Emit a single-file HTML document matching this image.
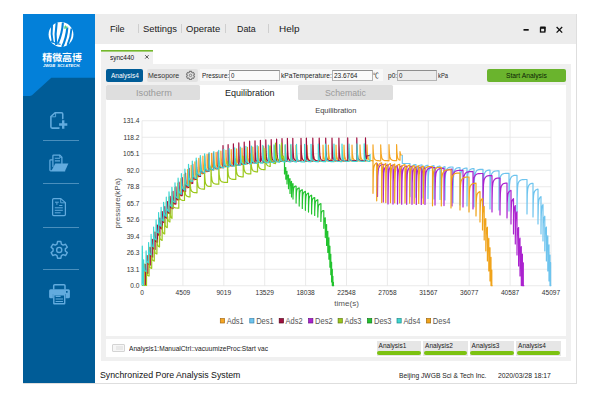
<!DOCTYPE html>
<html><head><meta charset="utf-8"><title>Synchronized Pore Analysis System</title>
<style>
html,body{margin:0;padding:0;background:#fff;}
body{width:600px;height:401px;position:relative;overflow:hidden;font-family:"Liberation Sans","Noto Sans CJK SC",sans-serif;color:#222;}
.abs{position:absolute;}
#win{left:23px;top:14px;width:553px;height:369px;background:#fff;border-right:1px solid #dedede;border-bottom:1px solid #dedede;}
#side{left:23px;top:14px;width:72px;height:369px;background:#005c97;}
#menubar{left:95px;top:14px;width:481px;height:30px;background:#ececec;}
.menu{top:22.5px;font-size:11.3px;color:#1a1a1a;line-height:13px;white-space:nowrap;}
.msep{top:24.3px;width:0.9px;height:8.6px;background:#cfcfcf;}
#panel{left:101px;top:64px;width:470px;height:297.4px;background:#f0f0f0;}
#ftab{left:101px;top:50px;width:52px;height:15px;background:linear-gradient(#74b72c 0,#74b72c 1px,#a3cf76 1px,#a3cf76 2px,#f0f0f0 2px);}
.t{white-space:nowrap;line-height:1;}
.inp{background:#fafafa;border:0.9px solid #b4b4b4;border-top-color:#8e8e8e;box-sizing:border-box;height:11.4px;top:69.6px;font-size:6.6px;line-height:9.6px;padding-left:1.5px;color:#222;}
.lbl{font-size:6.6px;top:71.8px;color:#222;}
.tab{top:85px;height:15.3px;font-size:9.6px;text-align:center;line-height:15.3px;color:#9a9a9a;background:#dedede;border-radius:1.5px;}
.abox{top:341px;width:44.8px;height:14.6px;background:#e6e6e6;font-size:6.7px;color:#222;}
.abox span{position:absolute;left:2.3px;top:1.3px;line-height:8px;}
.abox i{position:absolute;left:0.6px;right:0.6px;bottom:0.3px;height:4.2px;background:#7cc211;border-radius:2.2px;}
.sep{left:43px;width:35.5px;height:0.9px;background:#4a8fbd;}
</style></head><body>
<div id="win" class="abs"></div>
<div id="side" class="abs">
<svg width="72" height="369" viewBox="0 0 72 369" style="position:absolute;left:0;top:0">
<path d="M0 0H72V63.8H28.3L9 81.3Q8 82 6.5 82H0Z" fill="#0380d9"/>
<!-- logo -->
<g transform="translate(38,20.5)">
<circle r="12.4" fill="#fff"/>
<g fill="none" stroke="#0380d9" stroke-linecap="butt">
<path d="M-8.9 -9.5 Q-10.2 -1 -8.2 8" stroke-width="1.9"/>
<path d="M-4.3 -12 Q-6.2 -1 -4.8 10.5" stroke-width="2.1"/>
<path d="M1.9 -12 Q1.2 -1 -3 8.6" stroke-width="2.1"/>
<path d="M6.3 -7 Q5.6 3 1.2 12.5" stroke-width="2.2"/>
<path d="M10.5 -6 Q10 3 6.6 10.5" stroke-width="2.0"/>
<path d="M-10 6.4 Q-5 9.6 -0.5 9.8" stroke-width="1.2"/>
</g>
<path d="M4.6 -9.6l.7 1.5 1.6.2-1.2 1.1.3 1.6-1.4-.8-1.4.8.3-1.6-1.2-1.1 1.6-.2z" fill="#5fd08a"/>
</g>
<!-- icons -->
<g fill="none" stroke="#62abde" stroke-linejoin="round" stroke-linecap="round">
<path d="M36 114.1H29.2Q27.9 114.1 27.9 112.8V102.5L32.3 98.7H38.5Q39.75 98.7 39.75 100V104.6" stroke-width="1.55"/>
<path d="M32.6 99.3V102.8H28.5" stroke-width="0.9"/>
<path d="M40.2 106.3V114.8M36.1 110.55H44.3" stroke-width="2.4" stroke-linecap="butt"/>
</g>
<!-- folder -->
<g fill="none" stroke="#62abde" stroke-linejoin="round" stroke-linecap="round">
<path d="M29.4 145.8H27.7Q26.9 145.8 26.9 146.6V156.1Q26.9 156.9 27.7 156.9H41.6" stroke-width="1.25"/>
<path d="M29.9 152.5V141.8Q29.9 141 30.7 141H36.7L38.9 143.2V149.4" stroke-width="1.25"/>
<path d="M36.6 141.3V143.4H38.7" stroke-width="0.8"/>
<path d="M31.8 144.2H37M31.8 146.8H37" stroke-width="1.15" stroke-linecap="butt"/>
</g>
<path d="M32.3 149.5H45.4L42 157.1H28.3Z" fill="#62abde"/>
<!-- document -->
<g fill="none" stroke="#62abde" stroke-linejoin="round" stroke-linecap="round">
<path d="M30.7 184.6H37.8L42.4 188.6V200.6Q42.4 201.7 41.3 201.7H30.7Q29.6 201.7 29.6 200.6V185.7Q29.6 184.6 30.7 184.6Z" stroke-width="1.25"/>
<path d="M37.7 185V188.8H42" stroke-width="0.9"/>
<path d="M32 188.2H35.8M33.9 188.4V190.8" stroke-width="1.0" stroke-linecap="butt"/>
<path d="M36.2 191.5H39.4M31.8 193.8H39.8M31.8 196.3H39.8M31.8 198.8H37.6" stroke-width="1.0" stroke-linecap="butt"/>
</g>
<!-- gear -->
<g transform="translate(36.2,235.9)" fill="none" stroke="#62abde" stroke-width="1.4" stroke-linejoin="round">
<path d="M-2.18 -5.80L-1.69 -8.33L1.69 -8.33L2.18 -5.80L3.93 -4.79L6.37 -5.63L8.06 -2.70L6.12 -1.01L6.12 1.01L8.06 2.70L6.37 5.63L3.93 4.79L2.18 5.80L1.69 8.33L-1.69 8.33L-2.18 5.80L-3.93 4.79L-6.37 5.63L-8.06 2.70L-6.12 1.01L-6.12 -1.01L-8.06 -2.70L-6.37 -5.63L-3.93 -4.79Z"/>
<circle r="2.55"/>
</g>
<!-- printer -->
<path d="M30.7 275.6V271.8Q30.7 270.8 31.7 270.8H41Q42 270.8 42 271.8V275.6" fill="none" stroke="#62abde" stroke-width="1.5"/>
<path d="M27.6 275.2H45.4Q46.9 275.2 46.9 276.7V282.7Q46.9 284.2 45.4 284.2H42.6V280H29.9V284.2H27.6Q26.1 284.2 26.1 282.7V276.7Q26.1 275.2 27.6 275.2ZM43 277.1V278.7H44.6V277.1Z" fill="#62abde" fill-rule="evenodd"/>
<path d="M30.1 280.1H42.4V289.4Q42.4 290.5 41.3 290.5H31.2Q30.1 290.5 30.1 289.4ZM31.5 281.5V289.1H41V281.5Z" fill="#62abde" fill-rule="evenodd"/>
<path d="M32.6 282.4H37.6M32.6 285H40M32.6 287.5H40" stroke="#62abde" stroke-width="1.15" fill="none"/>
</svg>
<div class="abs t" style="left:19.2px;top:39.5px;width:40px;font-size:9.95px;font-weight:700;color:#fff;letter-spacing:0px;transform:scaleY(0.93);transform-origin:0 0;font-family:'Liberation Sans','Noto Sans CJK SC',sans-serif;">精微高博</div>
<div class="abs t" style="left:20.1px;top:50.9px;font-size:4px;font-weight:bold;font-style:italic;color:#fff;transform:scale(1.03,0.8);transform-origin:0 0;letter-spacing:-0.05px;">JWGB&nbsp; SCI.&amp;TECH.</div>
</div>
<div class="abs sep" style="top:140px"></div>
<div class="abs sep" style="top:183px"></div>
<div class="abs sep" style="top:226.6px"></div>
<div class="abs sep" style="top:269px"></div>

<div id="menubar" class="abs"></div>
<div class="abs msep" style="left:137.9px"></div>
<div class="abs msep" style="left:181.3px"></div>
<div class="abs msep" style="left:224.5px"></div>
<div class="abs msep" style="left:267.5px"></div>
<svg class="abs" style="left:520px;top:20px" width="50" height="20" viewBox="520 20 50 20">
<rect x="523.5" y="29" width="5.2" height="1.7" fill="#111"/>
<rect x="540.5" y="28" width="4.3" height="4" fill="none" stroke="#111" stroke-width="1.3"/>
<rect x="540.3" y="26.5" width="5.2" height="1.9" fill="#111"/>
<path d="M545.3 27V31.4" fill="none" stroke="#111" stroke-width="0.7"/>
<path d="M556.6 27L562.2 32.6M562.2 27L556.6 32.6" stroke="#111" stroke-width="1.3" fill="none"/>
</svg>

<div id="panel" class="abs"></div>
<div id="ftab" class="abs"></div>
<svg class="abs" style="left:143.5px;top:54px" width="6" height="6" viewBox="0 0 6 6"><path d="M1.2 1.2L4.6 4.6M4.6 1.2L1.2 4.6" stroke="#222" stroke-width="0.75" fill="none"/></svg>

<div class="abs" style="left:106.3px;top:69.2px;width:36.8px;height:12.6px;background:#005c97;border-radius:2px;"></div>
<div class="abs" style="left:146.8px;top:69.2px;width:51.4px;height:12.6px;background:#e2e2e2;border-radius:2px;"></div>
<svg class="abs" style="left:185px;top:70px" width="11" height="11" viewBox="-5.5 -5.4 11 11"><path d="M-1.25 -2.95L-1.12 -4.05L1.12 -4.05L1.25 -2.95L1.93 -2.55L2.95 -2.99L4.07 -1.05L3.18 -0.39L3.18 0.39L4.07 1.05L2.95 2.99L1.93 2.55L1.25 2.95L1.12 4.05L-1.12 4.05L-1.25 2.95L-1.93 2.55L-2.95 2.99L-4.07 1.05L-3.18 0.39L-3.18 -0.39L-4.07 -1.05L-2.95 -2.99L-1.93 -2.55Z" fill="none" stroke="#7a7a7a" stroke-width="1.05" stroke-linejoin="round"/><circle r="1.25" fill="none" stroke="#7a7a7a" stroke-width="0.95"/></svg>

<div class="abs" style="left:200.4px;top:69px;width:182.8px;height:12.4px;background:#f8f8f8;"></div>
<div class="abs inp" style="left:229px;width:51.2px;"></div>
<div class="abs inp" style="left:332.2px;width:41px;"></div>
<div class="abs inp" style="left:396.8px;width:40px;background:#ececec;"></div>
<div class="abs" style="left:486.8px;top:69px;width:79.2px;height:12.9px;background:#6ab42d;border-radius:2px;"></div>

<div class="abs" style="left:106.3px;top:85px;width:459.7px;height:251.2px;background:#fff;"></div>
<div class="abs tab" style="left:106.3px;width:94px;"></div>

<div class="abs tab" style="left:298.3px;width:94.7px;"></div>
<svg class="chart" width="460" height="252" viewBox="106 85 460 252" style="position:absolute;left:106px;top:85px" font-family="Liberation Sans, Arial, sans-serif">
<g stroke="#e4e4e4" stroke-width="0.8" shape-rendering="auto"><line x1="142" y1="120.75" x2="551" y2="120.75"/><line x1="142" y1="137.25" x2="551" y2="137.25"/><line x1="142" y1="153.75" x2="551" y2="153.75"/><line x1="142" y1="170.25" x2="551" y2="170.25"/><line x1="142" y1="186.75" x2="551" y2="186.75"/><line x1="142" y1="203.25" x2="551" y2="203.25"/><line x1="142" y1="219.75" x2="551" y2="219.75"/><line x1="142" y1="236.25" x2="551" y2="236.25"/><line x1="142" y1="252.75" x2="551" y2="252.75"/><line x1="142" y1="269.25" x2="551" y2="269.25"/><line x1="142" y1="285.75" x2="551" y2="285.75"/><line x1="142.00" y1="120.75" x2="142.00" y2="285.75"/><line x1="182.90" y1="120.75" x2="182.90" y2="285.75"/><line x1="223.80" y1="120.75" x2="223.80" y2="285.75"/><line x1="264.70" y1="120.75" x2="264.70" y2="285.75"/><line x1="305.60" y1="120.75" x2="305.60" y2="285.75"/><line x1="346.50" y1="120.75" x2="346.50" y2="285.75"/><line x1="387.40" y1="120.75" x2="387.40" y2="285.75"/><line x1="428.30" y1="120.75" x2="428.30" y2="285.75"/><line x1="469.20" y1="120.75" x2="469.20" y2="285.75"/><line x1="510.10" y1="120.75" x2="510.10" y2="285.75"/><line x1="551.00" y1="120.75" x2="551.00" y2="285.75"/></g>
<g fill="none" stroke-width="1.2" stroke-linejoin="round">
<polyline stroke="#f5a623" points="142.0,285.5 144.5,285.5 144.5,264.1 144.5,264.7 144.6,266.2 144.8,267.9 145.0,269.4 145.2,270.5 145.5,271.4 145.8,272.0 146.1,272.3 146.5,272.6 146.9,272.8 146.9,272.8 146.9,255.5 146.9,256.2 147.0,257.7 147.2,259.4 147.4,261.0 147.6,262.2 147.9,263.0 148.2,263.6 148.5,264.0 148.9,264.3 149.3,264.5 149.3,264.5 149.3,247.3 149.3,248.0 149.4,249.6 149.6,251.3 149.8,252.9 150.0,254.2 150.3,255.1 150.6,255.7 150.9,256.1 151.3,256.4 151.7,256.6 151.7,256.6 151.7,239.3 151.7,240.1 151.8,241.7 152.0,243.5 152.2,245.1 152.4,246.4 152.7,247.3 153.0,248.0 153.3,248.4 153.7,248.7 154.1,248.9 154.1,248.9 154.1,232.0 154.1,232.8 154.2,234.4 154.4,236.3 154.6,238.0 154.8,239.3 155.1,240.2 155.4,240.9 155.7,241.3 156.1,241.6 156.5,241.9 156.5,241.9 156.5,225.1 156.5,225.9 156.6,227.6 156.8,229.5 157.0,231.2 157.2,232.6 157.5,233.6 157.8,234.2 158.1,234.7 158.5,235.0 158.9,235.2 158.9,235.2 158.9,218.2 158.9,219.0 159.0,220.8 159.2,222.7 159.4,224.5 159.6,225.9 159.9,226.9 160.2,227.6 160.5,228.1 160.9,228.4 161.3,228.6 161.3,228.6 161.3,211.9 161.3,212.7 161.4,214.5 161.6,216.6 161.8,218.4 162.0,219.9 162.3,220.9 162.6,221.5 162.9,222.0 163.3,222.3 163.8,222.6 163.8,222.6 163.8,207.1 163.8,208.0 163.9,209.9 164.0,212.1 164.2,214.0 164.5,215.4 164.8,216.4 165.1,217.1 165.5,217.6 165.9,217.9 166.3,218.1 166.3,218.1 166.3,202.2 166.4,203.1 166.5,205.2 166.6,207.4 166.8,209.4 167.1,210.8 167.4,211.8 167.7,212.5 168.1,213.0 168.5,213.3 169.0,213.5 169.0,213.5 169.0,197.0 169.0,198.0 169.1,200.2 169.3,202.5 169.5,204.6 169.8,206.0 170.1,207.0 170.5,207.7 170.9,208.1 171.3,208.5 171.8,208.7 171.8,208.7 171.8,192.1 171.8,193.2 171.9,195.5 172.1,198.0 172.3,200.0 172.6,201.5 172.9,202.5 173.3,203.2 173.7,203.6 174.2,203.9 174.7,204.2 174.7,204.2 174.7,187.7 174.7,188.9 174.8,191.3 175.0,193.9 175.3,196.0 175.5,197.6 175.9,198.6 176.3,199.2 176.7,199.6 177.2,199.9 177.7,200.1 177.7,200.1 177.7,183.1 177.8,184.4 177.9,187.0 178.1,189.7 178.3,191.9 178.6,193.4 179.0,194.4 179.4,195.0 179.8,195.5 180.3,195.8 180.9,196.0 180.9,196.0 180.9,178.7 180.9,180.1 181.0,182.8 181.2,185.7 181.5,187.9 181.8,189.5 182.2,190.4 182.6,191.1 183.1,191.5 183.6,191.8 184.2,192.0 184.2,192.0 184.2,174.3 184.2,175.7 184.3,178.6 184.6,181.6 184.8,183.9 185.1,185.5 185.5,186.4 186.0,187.1 186.5,187.5 187.0,187.8 187.6,188.0 187.6,188.0 187.6,169.6 187.7,171.2 187.8,174.3 188.0,177.4 188.3,179.7 188.6,181.3 189.0,182.3 189.5,182.9 190.0,183.3 190.6,183.6 191.2,183.8 191.2,183.8 191.2,165.3 191.2,167.0 191.4,170.3 191.6,173.5 191.9,175.9 192.3,177.5 192.7,178.5 193.1,179.1 193.7,179.5 194.3,179.7 194.9,179.9 194.9,179.9 194.9,161.9 195.0,163.7 195.1,167.1 195.4,170.5 195.7,173.0 196.0,174.5 196.5,175.5 197.0,176.1 197.5,176.5 198.1,176.7 198.8,176.9 198.8,176.9 198.8,158.3 198.9,160.2 199.0,163.8 199.3,167.3 199.6,169.9 200.0,171.4 200.4,172.4 200.9,173.0 201.5,173.4 202.2,173.6 202.9,173.8 202.9,173.8 202.9,156.0 202.9,158.1 203.1,161.9 203.4,165.5 203.7,168.0 204.1,169.5 204.6,170.4 205.1,171.0 205.7,171.4 206.4,171.6 207.1,171.8 207.1,171.8 207.1,154.3 207.2,156.4 207.4,160.3 207.6,164.0 208.0,166.4 208.4,167.9 208.9,168.8 209.4,169.4 210.1,169.7 210.8,170.0 211.5,170.1 211.5,170.1 211.5,153.3 211.6,155.5 211.8,159.5 212.1,163.1 212.4,165.6 212.9,167.0 213.4,167.9 214.0,168.4 214.6,168.8 215.3,169.0 216.1,169.1 216.1,169.1 216.1,152.3 216.2,154.5 216.4,158.6 216.7,162.3 217.1,164.7 217.5,166.1 218.1,166.9 218.7,167.4 219.4,167.7 220.1,168.0 220.9,168.1 220.9,168.1 220.9,151.2 221.0,153.5 221.2,157.7 221.5,161.4 221.9,163.8 222.4,165.1 222.9,165.9 223.6,166.4 224.3,166.7 225.1,166.9 226.0,167.0 226.0,167.0 226.0,150.3 226.0,152.8 226.2,157.1 226.6,160.8 227.0,163.1 227.5,164.4 228.0,165.1 228.7,165.6 229.5,165.9 230.3,166.1 231.2,166.2 231.2,166.2 231.2,149.6 231.3,152.1 231.5,156.5 231.8,160.2 232.2,162.5 232.7,163.8 233.3,164.5 234.0,164.9 234.8,165.2 235.6,165.4 236.6,165.5 236.6,165.5 236.6,148.8 236.7,151.3 236.9,155.8 237.2,159.5 237.6,161.7 238.1,163.0 238.7,163.7 239.4,164.2 240.2,164.4 241.0,164.6 242.0,164.7 242.0,164.7 242.0,148.1 242.1,150.6 242.3,155.0 242.6,158.7 243.0,161.0 243.5,162.2 244.1,163.0 244.8,163.4 245.6,163.7 246.4,163.9 247.4,164.0 247.4,164.0 247.4,147.3 247.5,149.8 247.7,154.2 248.0,157.9 248.4,160.2 248.9,161.5 249.5,162.2 250.2,162.6 251.0,162.9 251.8,163.1 252.8,163.2 252.8,163.2 252.8,147.0 252.9,149.5 253.1,153.9 253.4,157.6 253.8,159.9 254.3,161.2 254.9,161.9 255.6,162.3 256.4,162.6 257.2,162.8 258.2,162.9 258.2,162.9 258.2,146.7 258.3,149.2 258.5,153.7 258.8,157.4 259.2,159.6 259.7,160.9 260.3,161.6 261.0,162.0 261.8,162.3 262.6,162.5 263.6,162.6 263.6,162.6 263.6,146.4 263.7,148.9 263.9,153.4 264.2,157.1 264.6,159.3 265.1,160.6 265.7,161.3 266.4,161.8 267.2,162.0 268.0,162.2 269.0,162.3 269.0,162.3 269.0,146.1 269.1,148.6 269.3,153.1 269.6,156.8 270.0,159.0 270.5,160.3 271.1,161.0 271.8,161.5 272.6,161.7 273.4,161.9 274.4,162.0 274.4,162.0 274.4,145.8 274.5,148.3 274.7,152.8 275.0,156.5 275.4,158.8 275.9,160.0 276.5,160.7 277.2,161.2 278.0,161.4 278.8,161.6 279.8,161.7 279.8,161.7 279.8,145.5 279.9,148.0 280.1,152.5 280.4,156.2 280.8,158.5 281.3,159.7 281.9,160.4 282.6,160.9 283.4,161.2 284.2,161.3 285.2,161.4 285.2,161.4 285.2,145.5 285.3,148.0 285.5,152.4 285.8,156.1 286.2,158.4 286.7,159.6 287.3,160.4 288.0,160.8 288.8,161.1 289.6,161.3 290.6,161.4 290.6,161.4 290.6,145.4 290.7,147.9 290.9,152.4 291.2,156.1 291.6,158.3 292.1,159.6 292.7,160.3 293.4,160.8 294.2,161.0 295.0,161.2 296.0,161.3 296.0,161.3 296.0,145.4 296.1,147.7 296.3,152.0 296.6,155.7 296.9,158.0 297.4,159.4 298.0,160.1 298.6,160.6 299.3,160.9 300.1,161.1 301.0,161.2 301.0,161.2 301.0,145.4 301.1,148.1 301.3,152.8 301.7,156.5 302.2,158.6 302.7,159.8 303.4,160.4 304.2,160.8 305.0,161.1 306.0,161.2 307.0,161.3 307.0,161.3 307.0,145.3 307.1,148.1 307.3,152.8 307.7,156.5 308.2,158.6 308.7,159.7 309.4,160.4 310.2,160.8 311.0,161.0 312.0,161.2 313.0,161.2 313.0,161.2 313.0,145.3 313.2,149.5 313.6,155.3 314.1,158.5 314.9,159.9 315.9,160.6 317.0,161.0 318.3,161.1 319.7,161.2 321.3,161.2 323.0,161.3 323.0,161.3 323.0,145.2 323.1,147.7 323.3,152.1 323.6,155.8 324.0,158.1 324.6,159.4 325.2,160.1 325.8,160.5 326.6,160.8 327.5,161.0 328.4,161.1 328.4,161.1 328.4,145.2 328.5,148.6 328.8,153.8 329.3,157.4 329.9,159.2 330.6,160.1 331.4,160.6 332.4,160.9 333.5,161.0 334.7,161.1 336.0,161.1 336.0,161.1 336.0,145.1 336.1,148.7 336.4,154.0 336.9,157.5 337.5,159.3 338.3,160.1 339.2,160.6 340.2,160.8 341.4,161.0 342.6,161.1 344.0,161.1 344.0,161.1 344.0,145.0 344.1,148.6 344.4,154.0 344.9,157.5 345.5,159.2 346.3,160.1 347.2,160.5 348.2,160.8 349.4,160.9 350.6,161.0 352.0,161.0 352.0,161.0 352.0,145.0 352.1,148.5 352.4,153.9 352.9,157.4 353.5,159.1 354.3,160.0 355.2,160.5 356.2,160.7 357.4,160.9 358.6,160.9 360.0,161.0 360.0,161.0 360.0,144.9 360.1,148.1 360.4,153.2 360.8,156.8 361.3,158.7 362.0,159.7 362.8,160.2 363.7,160.6 364.7,160.8 365.8,160.8 367.0,160.9 367.0,160.9 367.0,144.9 367.1,147.6 367.3,152.3 367.7,156.0 368.2,158.2 368.7,159.3 369.4,160.0 370.2,160.4 371.0,160.6 372.0,160.7 373.0,160.8 373.0,160.8 373.0,144.8 373.1,148.3 373.4,153.6 373.9,157.1 374.5,158.9 375.2,159.8 376.1,160.3 377.1,160.6 378.2,160.7 379.4,160.8 380.7,160.8 380.7,160.8 380.7,144.8 380.8,148.4 381.2,153.9 381.7,157.4 382.3,159.0 383.1,159.9 384.0,160.3 385.1,160.6 386.3,160.7 387.6,160.7 389.0,160.8 389.0,160.8 389.0,144.7 389.1,148.1 389.4,153.4 389.9,156.9 390.5,158.7 391.2,159.6 392.0,160.1 393.0,160.4 394.1,160.6 395.3,160.7 396.6,160.7 396.6,160.7 396.6,144.7 396.7,146.3 396.8,149.6 397.0,153.0 397.3,155.6 397.6,157.4 398.0,158.5 398.4,159.2 398.9,159.7 399.4,160.0 400.0,160.2 400.0,160.0 400.0,151.6 400.6,155.0 402.3,155.0"/>
<polyline stroke="#6ec4ee" points="402.3,155.0 402.3,163.5 410.0,163.5 410.0,196.7 410.1,187.4 410.3,176.0 410.7,170.6 411.2,168.3 411.7,166.9 412.4,165.9 413.2,165.3 414.0,164.9 415.0,164.6 416.0,164.5 416.0,164.5 416.0,197.3 416.1,187.9 416.3,176.5 416.7,171.1 417.2,168.8 417.7,167.4 418.4,166.4 419.2,165.7 420.0,165.3 421.0,165.0 422.0,164.9 422.0,164.9 422.0,197.9 422.1,188.4 422.3,176.9 422.7,171.5 423.2,169.2 423.7,167.8 424.4,166.8 425.2,166.1 426.0,165.7 427.0,165.4 428.0,165.3 428.0,165.3 428.0,198.4 428.1,188.9 428.3,177.4 428.7,171.9 429.2,169.6 429.7,168.2 430.4,167.2 431.2,166.5 432.0,166.1 433.0,165.8 434.0,165.7 434.0,165.7 434.0,199.0 434.1,189.5 434.3,177.9 434.7,172.3 435.2,170.0 435.7,168.6 436.4,167.6 437.2,166.9 438.0,166.5 439.0,166.2 440.0,166.1 440.0,166.1 440.0,199.5 440.1,191.3 440.3,180.1 440.6,173.9 441.0,171.1 441.4,169.6 442.0,168.5 442.6,167.7 443.3,167.2 444.1,166.8 445.0,166.6 445.0,166.6 445.0,200.0 445.1,188.1 445.4,176.3 445.9,171.9 446.5,169.9 447.3,168.7 448.2,167.8 449.2,167.4 450.4,167.2 451.6,167.0 453.0,167.0 453.0,167.0 453.0,202.7 453.1,191.2 453.4,178.7 453.8,173.4 454.3,171.2 455.0,169.7 455.8,168.7 456.7,168.1 457.7,167.8 458.8,167.6 460.0,167.6 460.0,167.6 460.0,205.0 460.1,193.0 460.4,179.8 460.8,174.3 461.3,171.9 462.0,170.4 462.8,169.3 463.7,168.7 464.7,168.3 465.8,168.2 467.0,168.1 467.0,168.1 467.0,205.9 467.1,193.7 467.4,180.4 467.8,174.8 468.3,172.4 469.0,170.9 469.8,169.9 470.7,169.2 471.7,168.9 472.8,168.7 474.0,168.6 474.0,168.6 474.0,206.8 474.1,192.1 474.5,178.9 475.0,174.4 475.7,172.2 476.6,170.8 477.6,170.0 478.7,169.6 480.0,169.4 481.4,169.3 483.0,169.3 483.0,169.3 483.0,208.0 483.1,195.6 483.4,182.1 483.8,176.4 484.3,174.0 485.0,172.4 485.8,171.3 486.7,170.7 487.7,170.3 488.8,170.1 490.0,170.1 490.0,170.1 490.0,208.9 490.1,194.0 490.5,180.6 491.0,176.0 491.7,173.9 492.6,172.5 493.6,171.6 494.7,171.2 496.0,171.0 497.4,170.9 499.0,170.9 499.0,170.9 499.0,210.0 499.2,194.5 499.6,181.8 500.1,177.7 500.9,175.7 501.9,174.5 503.0,173.8 504.3,173.5 505.7,173.3 507.3,173.3 509.0,173.3 509.0,173.3 509.0,211.1 509.1,198.2 509.4,185.4 509.9,180.6 510.5,178.5 511.3,177.1 512.2,176.2 513.2,175.7 514.4,175.4 515.6,175.3 517.0,175.3 517.0,175.3 517.0,212.0 517.2,198.3 517.6,187.1 518.1,183.5 518.9,181.7 519.9,180.6 521.0,180.0 522.3,179.7 523.7,179.6 525.3,179.5 527.0,179.5 527.0,179.5 527.0,214.0 527.1,205.1 527.3,194.2 527.7,189.1 528.2,186.9 528.7,185.6 529.4,184.6 530.2,184.0 531.0,183.6 532.0,183.4 533.0,183.3 533.0,183.3 533.0,217.0 533.1,210.0 533.3,200.6 533.6,195.3 534.0,193.0 534.4,191.7 535.0,190.8 535.6,190.1 536.3,189.7 537.1,189.4 538.0,189.2 538.0,189.2 538.0,224.0 538.0,219.5 538.2,211.7 538.3,205.6 538.6,202.1 538.9,200.2 539.2,199.1 539.6,198.2 540.0,197.5 540.5,197.0 541.0,196.6 541.0,196.6 541.0,234.0 541.0,230.5 541.1,223.8 541.2,217.3 541.4,212.5 541.6,209.6 541.8,207.8 542.1,206.7 542.3,205.8 542.7,205.1 543.0,204.5 543.0,204.5 543.0,241.0 543.0,238.3 543.1,233.0 543.2,227.6 543.3,223.5 543.5,220.8 543.7,219.2 543.9,218.1 544.2,217.3 544.5,216.7 544.8,216.2 544.8,216.2 544.8,251.0 544.8,248.6 544.9,243.9 545.0,238.9 545.1,234.8 545.3,232.0 545.4,230.2 545.6,229.1 545.9,228.3 546.1,227.6 546.4,227.1 546.4,227.1 546.4,261.0 546.4,258.7 546.5,253.8 546.6,248.7 546.7,244.4 546.8,241.3 547.0,239.3 547.1,238.0 547.3,237.1 547.6,236.4 547.8,235.8 547.8,235.8 547.8,271.0 547.8,268.6 547.9,263.6 547.9,258.2 548.0,253.7 548.1,250.6 548.3,248.5 548.4,247.2 548.6,246.2 548.8,245.5 549.0,244.9 549.0,244.9 549.0,281.0 549.0,278.6 549.1,273.6 549.1,268.3 549.2,263.9 549.3,260.7 549.4,258.7 549.5,257.3 549.7,256.4 549.8,255.7 550.0,255.1 550.0,255.1 550.0,285.6 550.0,285.6 550.0,282.2 550.1,276.6 550.1,271.9 550.2,268.6 550.2,266.5 550.3,265.1 550.4,264.1 550.5,263.3 550.6,262.7 550.6,262.7 550.6,285.6 550.6,285.6 550.6,285.6 550.6,285.6 550.7,285.6 550.7,285.6 550.8,285.6 550.8,285.6 550.9,285.6 550.9,285.6 551.0,285.6 551.0,285.5"/>
<polyline stroke="#a01040" points="142.0,285.5 145.5,285.5 145.5,264.3 145.5,265.2 145.6,267.0 145.8,268.9 146.0,270.5 146.2,271.6 146.5,272.3 146.8,272.8 147.1,273.1 147.5,273.3 147.9,273.4 147.9,273.4 147.9,255.7 147.9,256.6 148.0,258.5 148.2,260.5 148.4,262.1 148.6,263.2 148.9,264.0 149.2,264.4 149.5,264.8 149.9,265.0 150.3,265.1 150.3,265.1 150.3,247.4 150.3,248.4 150.4,250.3 150.6,252.4 150.8,254.1 151.0,255.2 151.3,256.0 151.6,256.5 151.9,256.8 152.3,257.0 152.7,257.2 152.7,257.2 152.7,239.4 152.7,240.4 152.8,242.4 153.0,244.6 153.2,246.3 153.4,247.5 153.7,248.3 154.0,248.8 154.3,249.1 154.7,249.3 155.1,249.5 155.1,249.5 155.1,232.0 155.1,233.0 155.2,235.1 155.4,237.3 155.6,239.0 155.8,240.3 156.1,241.1 156.4,241.6 156.7,241.9 157.1,242.2 157.5,242.3 157.5,242.3 157.5,225.1 157.5,226.1 157.6,228.3 157.8,230.5 158.0,232.3 158.2,233.6 158.5,234.4 158.8,235.0 159.1,235.3 159.5,235.6 159.9,235.7 159.9,235.7 159.9,218.2 159.9,219.3 160.0,221.4 160.2,223.7 160.4,225.6 160.6,226.9 160.9,227.8 161.2,228.3 161.5,228.7 161.9,228.9 162.3,229.1 162.3,229.1 162.3,211.6 162.3,212.7 162.4,215.1 162.6,217.5 162.8,219.4 163.0,220.7 163.3,221.6 163.6,222.1 164.0,222.5 164.4,222.7 164.8,222.9 164.8,222.9 164.8,206.7 164.8,208.0 164.9,210.4 165.1,212.9 165.3,214.9 165.5,216.2 165.8,217.1 166.2,217.6 166.5,217.9 167.0,218.2 167.4,218.4 167.4,218.4 167.4,201.6 167.4,203.0 167.6,205.6 167.7,208.2 167.9,210.2 168.2,211.5 168.5,212.4 168.8,212.9 169.2,213.2 169.7,213.5 170.1,213.6 170.1,213.6 170.1,196.4 170.2,197.8 170.3,200.5 170.4,203.2 170.7,205.3 170.9,206.6 171.3,207.5 171.6,208.0 172.0,208.3 172.5,208.6 173.0,208.7 173.0,208.7 173.0,191.3 173.0,192.8 173.1,195.8 173.3,198.6 173.5,200.7 173.8,202.1 174.1,202.9 174.5,203.4 174.9,203.7 175.4,203.9 175.9,204.1 175.9,204.1 175.9,186.8 176.0,188.5 176.1,191.5 176.3,194.5 176.5,196.7 176.8,198.0 177.1,198.8 177.5,199.3 178.0,199.6 178.5,199.9 179.0,200.0 179.0,200.0 179.0,182.2 179.0,183.9 179.2,187.2 179.4,190.2 179.6,192.4 179.9,193.8 180.3,194.6 180.7,195.1 181.1,195.4 181.7,195.6 182.2,195.7 182.2,195.7 182.2,177.7 182.3,179.5 182.4,183.0 182.6,186.2 182.9,188.4 183.2,189.8 183.5,190.5 184.0,191.0 184.4,191.4 185.0,191.6 185.6,191.7 185.6,191.7 185.6,173.1 185.6,175.1 185.8,178.8 186.0,182.1 186.2,184.4 186.6,185.7 187.0,186.5 187.4,186.9 187.9,187.3 188.4,187.5 189.1,187.6 189.1,187.6 189.1,168.4 189.1,170.5 189.3,174.4 189.5,177.8 189.8,180.1 190.1,181.4 190.5,182.2 191.0,182.7 191.5,183.0 192.1,183.2 192.7,183.3 192.7,183.3 192.7,164.1 192.8,166.4 192.9,170.5 193.1,174.1 193.4,176.4 193.8,177.7 194.2,178.5 194.7,178.9 195.2,179.2 195.8,179.4 196.5,179.5 196.5,179.5 196.5,160.6 196.6,163.0 196.7,167.4 197.0,171.0 197.3,173.4 197.6,174.7 198.1,175.4 198.6,175.9 199.2,176.2 199.8,176.4 200.5,176.5 200.5,176.5 200.5,157.4 200.5,159.9 200.7,164.4 200.9,168.1 201.3,170.3 201.7,171.6 202.1,172.3 202.6,172.7 203.2,173.0 203.9,173.2 204.6,173.3 204.6,173.3 204.6,155.5 204.7,158.1 204.8,162.7 205.1,166.4 205.4,168.6 205.8,169.8 206.3,170.5 206.9,170.9 207.5,171.2 208.2,171.3 208.9,171.4 208.9,171.4 208.9,153.9 209.0,156.6 209.2,161.2 209.4,164.9 209.8,167.1 210.2,168.3 210.7,168.9 211.3,169.3 211.9,169.6 212.6,169.7 213.4,169.8 213.4,169.8 213.4,152.9 213.5,155.7 213.7,160.4 213.9,164.1 214.3,166.2 214.8,167.3 215.3,168.0 215.9,168.3 216.5,168.6 217.3,168.7 218.1,168.8 218.1,168.8 218.1,151.8 218.2,154.7 218.4,159.6 218.7,163.2 219.0,165.3 219.5,166.4 220.0,167.0 220.7,167.3 221.4,167.5 222.1,167.7 223.0,167.7 223.0,167.7 223.0,145.6 223.1,149.6 223.3,156.1 223.6,161.0 224.0,163.6 224.4,164.9 225.0,165.7 225.7,166.1 226.4,166.4 227.2,166.5 228.1,166.6 228.1,166.6 228.1,144.7 228.2,148.9 228.4,155.6 228.7,160.4 229.1,162.9 229.6,164.2 230.2,165.0 230.9,165.4 231.6,165.6 232.5,165.8 233.4,165.8 233.4,165.8 233.4,143.8 233.5,148.1 233.7,154.9 234.0,159.7 234.4,162.2 235.0,163.5 235.6,164.2 236.2,164.7 237.0,164.9 237.9,165.0 238.8,165.1 238.8,165.1 238.8,142.9 238.9,147.2 239.1,154.0 239.4,158.9 239.8,161.5 240.4,162.7 241.0,163.5 241.6,163.9 242.4,164.1 243.3,164.3 244.2,164.3 244.2,164.3 244.2,142.0 244.3,146.3 244.5,153.2 244.8,158.1 245.2,160.7 245.8,162.0 246.4,162.7 247.0,163.1 247.8,163.4 248.7,163.5 249.6,163.6 249.6,163.6 249.6,141.2 249.7,145.6 249.9,152.5 250.2,157.4 250.6,160.0 251.2,161.3 251.8,162.0 252.4,162.5 253.2,162.7 254.1,162.8 255.0,162.9 255.0,162.9 255.0,140.8 255.1,145.1 255.3,152.1 255.6,157.1 256.0,159.7 256.6,161.0 257.2,161.7 257.8,162.2 258.6,162.4 259.5,162.5 260.4,162.6 260.4,162.6 260.4,140.3 260.5,144.7 260.7,151.7 261.0,156.7 261.4,159.4 262.0,160.7 262.6,161.4 263.2,161.9 264.0,162.1 264.9,162.2 265.8,162.3 265.8,162.3 265.8,139.9 265.9,144.3 266.1,151.4 266.4,156.4 266.8,159.0 267.4,160.4 268.0,161.1 268.6,161.6 269.4,161.8 270.3,162.0 271.2,162.0 271.2,162.0 271.2,139.5 271.3,143.9 271.5,151.0 271.8,156.1 272.2,158.7 272.8,160.1 273.4,160.8 274.0,161.3 274.8,161.5 275.7,161.7 276.6,161.7 276.6,161.7 276.6,139.0 276.7,143.5 276.9,150.6 277.2,155.7 277.6,158.4 278.2,159.8 278.8,160.5 279.4,161.0 280.2,161.2 281.1,161.4 282.0,161.4 282.0,161.4 282.0,138.6 282.1,143.1 282.3,150.3 282.6,155.4 283.0,158.1 283.6,159.5 284.2,160.2 284.8,160.7 285.6,160.9 286.5,161.1 287.4,161.1 287.4,161.1 287.4,138.4 287.5,143.0 287.7,150.2 288.0,155.3 288.4,158.1 289.0,159.4 289.6,160.2 290.2,160.7 291.0,160.9 291.9,161.0 292.8,161.1 292.8,161.1 292.8,138.3 292.9,144.8 293.3,153.2 293.7,157.6 294.4,159.4 295.2,160.3 296.1,160.8 297.1,161.0 298.3,161.1 299.6,161.1 301.0,161.1 301.0,161.1 301.0,138.3 301.1,142.8 301.3,150.1 301.6,155.2 302.0,158.0 302.6,159.3 303.2,160.1 303.8,160.6 304.6,160.8 305.5,160.9 306.4,161.0 306.4,161.0 306.4,138.2 306.5,143.5 306.8,151.3 307.1,156.2 307.6,158.6 308.2,159.7 309.0,160.4 309.8,160.7 310.7,160.9 311.7,161.0 312.8,161.0 312.8,161.0 312.8,138.2 312.9,143.5 313.2,151.3 313.5,156.2 314.0,158.5 314.7,159.7 315.4,160.3 316.2,160.7 317.1,160.8 318.1,160.9 319.2,161.0 319.2,161.0 319.2,138.1 319.4,143.4 319.6,151.2 320.0,156.2 320.5,158.5 321.1,159.6 321.8,160.3 322.6,160.6 323.6,160.8 324.6,160.9 325.7,160.9 325.7,160.9 325.7,138.1 325.8,143.3 326.0,151.0 326.4,156.0 326.9,158.4 327.5,159.5 328.2,160.2 329.0,160.6 329.9,160.7 330.9,160.8 332.0,160.9 332.0,160.9 332.0,138.0 332.1,143.6 332.4,151.6 332.8,156.4 333.3,158.6 334.0,159.7 334.8,160.3 335.6,160.6 336.6,160.7 337.7,160.8 338.9,160.8 338.9,160.8 338.9,138.0 339.0,144.8 339.4,153.3 339.9,157.6 340.6,159.3 341.4,160.1 342.4,160.5 343.5,160.7 344.8,160.8 346.2,160.8 347.7,160.8 347.7,160.8 347.7,137.9 347.8,145.0 348.2,153.5 348.7,157.6 349.4,159.3 350.3,160.1 351.3,160.5 352.5,160.6 353.8,160.7 355.2,160.7 356.8,160.7 356.8,160.7 356.8,137.9 356.9,144.6 357.3,153.1 357.8,157.4 358.5,159.1 359.3,160.0 360.3,160.4 361.4,160.6 362.6,160.6 364.0,160.7 365.5,160.7 365.5,160.7 365.5,137.8 365.5,139.1 365.6,142.0 365.6,145.5 365.7,148.9 365.8,151.8 365.9,154.1 366.0,155.8 366.2,157.1 366.3,157.9 366.5,158.6 366.5,156.0 370.0,155.5"/>
<polyline stroke="#ab22cf" points="377.0,163.8 377.5,163.8 377.5,196.5 377.6,187.4 377.8,176.1 378.2,170.6 378.6,168.3 379.2,166.9 379.8,165.9 380.6,165.2 381.4,164.7 382.3,164.5 383.3,164.3 383.3,164.3 383.3,202.1 383.4,193.2 383.6,180.7 383.8,173.5 384.2,170.2 384.6,168.4 385.2,167.2 385.8,166.2 386.4,165.6 387.2,165.1 388.0,164.9 388.0,164.9 388.0,204.0 388.1,194.3 388.3,181.0 388.6,173.7 389.0,170.5 389.4,168.7 390.0,167.4 390.6,166.4 391.3,165.8 392.1,165.4 393.0,165.1 393.0,165.1 393.0,204.1 393.1,195.2 393.2,182.4 393.5,174.8 393.9,171.3 394.3,169.4 394.8,168.1 395.4,167.1 396.0,166.3 396.7,165.9 397.5,165.6 397.5,165.6 397.5,204.1 397.6,195.8 397.7,183.4 398.0,175.6 398.3,171.9 398.7,170.0 399.2,168.6 399.7,167.6 400.3,166.8 401.0,166.3 401.7,165.9 401.7,165.9 401.7,204.2 401.8,194.6 402.0,181.6 402.3,174.5 402.7,171.3 403.1,169.5 403.7,168.2 404.3,167.3 405.0,166.7 405.8,166.3 406.7,166.0 406.7,166.0 406.7,204.3 406.8,194.3 407.0,181.2 407.3,174.3 407.7,171.3 408.2,169.6 408.8,168.4 409.5,167.5 410.2,166.9 411.1,166.5 412.0,166.3 412.0,166.3 412.0,204.3 412.1,196.0 412.2,183.8 412.5,176.2 412.8,172.6 413.2,170.7 413.7,169.4 414.3,168.4 414.9,167.7 415.6,167.2 416.3,166.9 416.3,166.9 416.3,204.4 416.4,195.0 416.6,182.3 416.9,175.3 417.3,172.2 417.7,170.4 418.3,169.2 418.9,168.3 419.6,167.6 420.4,167.2 421.3,167.0 421.3,167.0 421.3,204.4 421.4,197.2 421.5,185.9 421.7,178.0 422.0,174.0 422.4,171.9 422.8,170.5 423.2,169.5 423.8,168.7 424.4,168.1 425.0,167.7 425.0,167.7 425.0,204.5 425.2,189.0 425.6,176.3 426.1,172.2 426.9,170.2 427.9,168.9 429.0,168.2 430.3,167.9 431.7,167.7 433.3,167.7 435.0,167.7 435.0,167.7 435.0,205.1 435.1,190.7 435.5,177.8 436.0,173.3 436.7,171.3 437.6,169.9 438.6,169.1 439.7,168.7 441.0,168.5 442.4,168.4 444.0,168.4 444.0,168.4 444.0,205.6 444.1,192.5 444.4,179.5 444.9,174.6 445.5,172.5 446.3,171.1 447.2,170.2 448.2,169.7 449.4,169.4 450.6,169.3 452.0,169.2 452.0,169.2 452.0,206.0 452.2,190.0 452.6,178.0 453.3,174.3 454.1,172.5 455.2,171.3 456.4,170.8 457.8,170.5 459.4,170.4 461.1,170.4 463.0,170.4 463.0,170.4 463.0,207.0 463.2,192.1 463.6,179.9 464.1,176.0 464.9,174.0 465.9,172.8 467.0,172.1 468.3,171.8 469.7,171.7 471.3,171.6 473.0,171.6 473.0,171.6 473.0,209.0 473.2,194.0 473.6,181.8 474.1,177.8 474.9,175.9 475.9,174.7 477.0,174.0 478.3,173.7 479.7,173.6 481.3,173.5 483.0,173.5 483.0,173.5 483.0,211.0 483.1,197.1 483.5,184.7 484.0,180.4 484.7,178.4 485.6,177.1 486.6,176.3 487.7,175.9 489.0,175.7 490.4,175.6 492.0,175.6 492.0,175.6 492.0,212.0 492.1,199.8 492.4,187.6 492.9,183.1 493.5,181.1 494.3,179.7 495.2,178.9 496.2,178.4 497.4,178.2 498.6,178.1 500.0,178.0 500.0,178.0 500.0,215.0 500.1,204.6 500.4,193.1 500.8,188.4 501.3,186.3 502.0,185.0 502.8,184.1 503.7,183.6 504.7,183.3 505.8,183.1 507.0,183.1 507.0,183.1 507.0,218.0 507.1,212.2 507.2,203.4 507.5,197.7 507.8,194.9 508.1,193.4 508.6,192.4 509.1,191.6 509.7,191.1 510.3,190.7 511.0,190.4 511.0,190.4 511.0,224.0 511.0,220.4 511.1,213.9 511.3,208.1 511.5,204.5 511.7,202.4 512.0,201.2 512.3,200.3 512.7,199.7 513.1,199.1 513.5,198.7 513.5,198.7 513.5,234.0 513.5,230.9 513.6,224.8 513.7,218.7 513.8,214.0 514.0,210.9 514.2,209.0 514.4,207.8 514.7,206.9 515.0,206.2 515.3,205.6 515.3,205.6 515.3,244.0 515.3,240.7 515.4,234.0 515.5,227.1 515.6,221.7 515.8,218.1 516.0,215.8 516.2,214.4 516.4,213.3 516.7,212.5 517.0,211.8 517.0,211.8 517.0,255.0 517.0,252.3 517.1,246.8 517.2,241.1 517.3,236.4 517.5,233.2 517.6,231.2 517.8,229.8 518.1,228.9 518.3,228.2 518.6,227.6 518.6,227.6 518.6,266.0 518.6,263.4 518.7,258.0 518.8,252.3 518.9,247.5 519.0,244.1 519.2,241.9 519.3,240.5 519.5,239.5 519.8,238.7 520.0,238.1 520.0,238.1 520.0,276.0 520.0,273.3 520.1,267.7 520.1,261.6 520.2,256.6 520.4,253.0 520.5,250.7 520.7,249.2 520.9,248.2 521.1,247.4 521.3,246.7 521.3,246.7 521.3,285.6 521.3,283.0 521.4,276.9 521.4,270.4 521.5,265.0 521.6,261.1 521.7,258.6 521.9,256.9 522.0,255.8 522.2,254.9 522.4,254.2 522.4,254.2 522.4,285.6 522.4,285.6 522.4,285.6 522.5,279.2 522.6,273.7 522.7,269.8 522.8,267.2 522.9,265.6 523.0,264.4 523.1,263.6 523.3,262.8 523.3,262.8 523.3,285.6 523.3,285.6 523.3,285.6 523.4,285.6 523.4,285.6 523.5,285.6 523.6,285.6 523.7,285.6 523.8,285.6 523.9,285.6 524.0,285.6 524.0,285.5"/>
<polyline stroke="#9cc81c" points="142.0,285.5 146.5,285.5 146.5,270.5 146.5,271.0 146.6,271.9 146.8,272.9 147.0,273.8 147.2,274.6 147.5,275.1 147.9,275.5 148.2,275.7 148.7,275.9 149.1,276.0 149.1,276.0 149.1,262.5 149.1,263.0 149.2,263.9 149.4,265.1 149.6,266.1 149.8,266.9 150.1,267.4 150.5,267.8 150.8,268.1 151.3,268.3 151.7,268.4 151.7,268.4 151.7,254.7 151.7,255.2 151.8,256.3 152.0,257.5 152.2,258.6 152.4,259.4 152.7,260.0 153.1,260.4 153.4,260.7 153.9,260.9 154.3,261.1 154.3,261.1 154.3,247.2 154.3,247.7 154.4,248.9 154.6,250.1 154.8,251.3 155.0,252.2 155.3,252.9 155.7,253.3 156.0,253.6 156.5,253.8 156.9,254.0 156.9,254.0 156.9,239.7 156.9,240.2 157.0,241.4 157.2,242.8 157.4,244.0 157.6,245.0 157.9,245.7 158.3,246.2 158.6,246.5 159.1,246.7 159.5,246.9 159.5,246.9 159.5,232.7 159.5,233.3 159.6,234.6 159.8,236.0 160.0,237.4 160.2,238.4 160.5,239.1 160.9,239.6 161.2,240.0 161.7,240.2 162.1,240.4 162.1,240.4 162.1,225.9 162.1,226.5 162.2,227.9 162.4,229.4 162.6,230.8 162.8,231.9 163.1,232.7 163.5,233.2 163.8,233.6 164.3,233.8 164.7,234.0 164.7,234.0 164.7,219.1 164.7,219.7 164.8,221.1 165.0,222.8 165.2,224.2 165.4,225.4 165.7,226.2 166.1,226.8 166.4,227.2 166.9,227.4 167.3,227.6 167.3,227.6 167.3,213.0 167.3,213.7 167.4,215.2 167.6,216.9 167.8,218.4 168.0,219.6 168.3,220.5 168.7,221.1 169.0,221.5 169.5,221.8 169.9,222.0 169.9,222.0 169.9,209.1 169.9,209.7 170.0,211.0 170.1,212.6 170.3,214.1 170.5,215.4 170.7,216.4 171.0,217.2 171.3,217.7 171.6,218.0 172.0,218.3 172.0,218.3 172.0,197.8 172.1,199.7 172.4,202.8 172.8,205.2 173.3,206.5 173.9,207.2 174.7,207.6 175.6,207.9 176.5,208.0 177.6,208.1 178.8,208.2 178.8,208.2 178.8,189.0 178.8,190.8 179.1,194.0 179.4,196.7 179.9,198.3 180.4,199.3 181.0,199.8 181.8,200.1 182.6,200.3 183.5,200.5 184.5,200.5 184.5,200.5 184.5,184.3 184.6,186.2 184.8,189.6 185.1,192.5 185.6,194.4 186.1,195.4 186.7,196.0 187.4,196.4 188.2,196.6 189.0,196.8 190.0,196.9 190.0,196.9 190.0,179.2 190.1,181.7 190.4,185.8 190.8,188.9 191.3,190.7 192.0,191.6 192.8,192.1 193.7,192.4 194.7,192.6 195.8,192.7 197.0,192.8 197.0,192.8 197.0,174.3 197.1,177.2 197.4,181.9 197.9,185.3 198.4,187.1 199.2,188.0 200.0,188.5 200.9,188.8 202.0,189.0 203.2,189.1 204.5,189.2 204.5,189.2 204.5,170.3 204.6,173.1 204.9,177.9 205.2,181.6 205.7,183.8 206.4,185.0 207.1,185.7 207.9,186.1 208.8,186.3 209.9,186.4 211.0,186.5 211.0,186.5 211.0,166.8 211.1,170.3 211.4,175.9 211.9,179.8 212.5,181.9 213.2,182.9 214.1,183.5 215.1,183.9 216.2,184.1 217.4,184.2 218.8,184.2 218.8,184.2 218.8,164.5 218.9,168.5 219.2,174.5 219.8,178.5 220.4,180.4 221.3,181.4 222.2,181.9 223.4,182.2 224.6,182.4 226.0,182.4 227.5,182.5 227.5,182.5 227.5,161.5 227.6,165.3 228.0,171.2 228.4,175.2 229.1,177.3 229.9,178.3 230.8,178.8 231.8,179.2 233.0,179.3 234.3,179.4 235.8,179.5 235.8,179.5 235.8,158.9 235.9,162.4 236.2,168.1 236.6,172.2 237.2,174.4 237.9,175.5 238.7,176.1 239.7,176.5 240.8,176.7 242.0,176.8 243.2,176.9 243.2,176.9 243.2,156.0 243.4,159.5 243.7,165.2 244.1,169.3 244.7,171.4 245.4,172.6 246.2,173.2 247.2,173.6 248.3,173.8 249.5,173.9 250.8,174.0 250.8,174.0 250.8,154.0 250.9,157.2 251.1,162.6 251.5,166.7 252.0,169.1 252.7,170.3 253.4,171.0 254.3,171.4 255.3,171.7 256.3,171.8 257.5,171.9 257.5,171.9 257.5,151.8 257.6,155.3 257.9,160.9 258.4,165.0 258.9,167.2 259.7,168.3 260.5,168.9 261.4,169.3 262.5,169.5 263.7,169.6 265.0,169.7 265.0,169.7 265.0,148.6 265.1,151.2 265.3,155.8 265.6,159.9 266.0,162.6 266.5,164.2 267.1,165.1 267.8,165.7 268.5,166.0 269.3,166.3 270.2,166.4 270.2,166.4 270.2,145.8 270.3,148.3 270.5,152.9 270.9,157.1 271.3,159.8 271.8,161.3 272.3,162.3 273.0,162.8 273.8,163.2 274.6,163.4 275.5,163.6 275.5,163.6 275.5,143.0 275.6,145.9 275.8,150.9 276.2,155.1 276.7,157.6 277.2,159.0 277.9,159.8 278.7,160.3 279.5,160.6 280.5,160.8 281.5,160.9 281.5,160.9 281.5,143.0 281.5,144.0 281.6,146.3 281.7,149.0 281.9,151.7 282.1,154.1 282.3,155.9 282.6,157.2 282.8,158.2 283.2,158.9 283.5,159.4 283.5,160.5 283.5,156.0 284.5,160.5"/>
<polyline stroke="#22c32e" points="284.5,161.0 284.5,161.0 284.5,174.0 284.5,173.4 284.6,172.2 284.6,170.8 284.7,169.7 284.9,169.0 285.0,168.4 285.2,168.1 285.4,167.9 285.6,167.7 285.8,167.6 285.8,167.6 285.8,179.2 285.8,178.5 285.9,177.0 285.9,175.3 286.0,174.0 286.1,173.0 286.3,172.4 286.4,172.0 286.6,171.7 286.8,171.5 287.0,171.3 287.0,171.3 287.0,184.0 287.0,183.1 287.1,181.2 287.2,179.3 287.3,177.8 287.4,176.8 287.6,176.2 287.8,175.8 288.0,175.5 288.2,175.3 288.5,175.1 288.5,175.1 288.5,188.7 288.5,187.7 288.6,185.6 288.7,183.5 288.8,181.8 288.9,180.6 289.1,179.9 289.3,179.4 289.5,179.1 289.7,178.9 290.0,178.6 290.0,178.6 290.0,193.5 290.0,192.2 290.1,189.8 290.2,187.2 290.3,185.2 290.4,183.9 290.6,183.0 290.8,182.5 291.0,182.1 291.2,181.8 291.5,181.5 291.5,181.5 291.5,197.0 291.5,195.6 291.6,192.9 291.7,190.0 291.8,187.8 291.9,186.2 292.1,185.3 292.3,184.7 292.5,184.2 292.7,183.9 293.0,183.6 293.0,183.6 293.0,199.1 293.0,196.7 293.2,192.7 293.4,189.8 293.6,188.3 293.9,187.5 294.2,187.0 294.6,186.6 295.1,186.3 295.6,186.1 296.1,186.0 296.1,186.0 296.1,203.1 296.1,200.2 296.3,195.6 296.5,192.3 296.7,190.6 297.0,189.7 297.3,189.1 297.7,188.7 298.2,188.3 298.7,188.1 299.2,187.9 299.2,187.9 299.2,206.1 299.2,203.0 299.4,198.1 299.6,194.5 299.8,192.6 300.1,191.7 300.4,191.0 300.8,190.5 301.3,190.2 301.8,189.9 302.3,189.7 302.3,189.7 302.3,208.5 302.3,205.3 302.5,200.1 302.7,196.4 302.9,194.5 303.2,193.5 303.5,192.8 303.9,192.3 304.4,191.9 304.9,191.6 305.4,191.4 305.4,191.4 305.4,210.3 305.4,207.1 305.6,201.9 305.8,198.2 306.0,196.2 306.3,195.2 306.6,194.5 307.0,194.0 307.5,193.6 308.0,193.3 308.5,193.1 308.5,193.1 308.5,212.1 308.5,208.9 308.7,203.8 308.9,200.1 309.1,198.2 309.4,197.2 309.7,196.5 310.1,196.0 310.6,195.7 311.1,195.4 311.6,195.2 311.6,195.2 311.6,213.9 311.6,210.8 311.8,205.8 312.0,202.3 312.2,200.4 312.5,199.4 312.8,198.8 313.2,198.3 313.7,197.9 314.2,197.7 314.7,197.5 314.7,197.5 314.7,215.5 314.7,212.6 314.9,207.8 315.1,204.4 315.3,202.6 315.6,201.6 315.9,201.0 316.3,200.6 316.8,200.2 317.3,199.9 317.8,199.7 317.8,199.7 317.8,217.1 317.8,214.6 318.0,210.6 318.2,207.6 318.4,206.1 318.7,205.3 319.0,204.8 319.4,204.4 319.9,204.1 320.4,203.8 320.9,203.7 320.9,203.7 320.9,221.4 320.9,219.5 321.1,216.3 321.2,213.9 321.5,212.6 321.7,211.9 322.1,211.4 322.4,211.1 322.8,210.8 323.3,210.6 323.8,210.5 323.8,210.5 323.8,228.3 323.8,227.2 323.9,225.1 324.0,222.8 324.1,221.1 324.2,219.9 324.4,219.1 324.6,218.6 324.8,218.3 325.0,218.0 325.3,217.8 325.3,217.8 325.3,237.6 325.3,236.4 325.4,233.9 325.4,231.2 325.5,229.0 325.7,227.4 325.8,226.4 326.0,225.7 326.2,225.3 326.4,224.9 326.6,224.6 326.6,224.6 326.6,245.5 326.6,244.2 326.7,241.4 326.7,238.5 326.8,236.1 326.9,234.4 327.1,233.2 327.2,232.5 327.4,232.0 327.6,231.6 327.8,231.3 327.8,231.3 327.8,252.5 327.8,251.1 327.9,248.3 327.9,245.3 328.0,242.8 328.1,241.0 328.2,239.8 328.4,239.0 328.5,238.5 328.7,238.1 328.9,237.8 328.9,237.8 328.9,259.2 328.9,258.0 329.0,255.5 329.0,252.8 329.1,250.6 329.2,249.0 329.3,248.0 329.4,247.3 329.6,246.8 329.7,246.5 329.9,246.2 329.9,246.2 329.9,267.2 329.9,266.0 329.9,263.5 330.0,260.9 330.1,258.7 330.2,257.1 330.3,256.1 330.4,255.4 330.5,255.0 330.6,254.6 330.8,254.3 330.8,254.3 330.8,274.7 330.8,273.5 330.8,271.2 330.9,268.6 331.0,266.5 331.0,265.0 331.1,264.0 331.2,263.3 331.3,262.9 331.5,262.6 331.6,262.3 331.6,262.3 331.6,281.9 331.6,280.7 331.6,278.3 331.7,275.7 331.7,273.6 331.8,272.0 331.9,271.0 332.0,270.4 332.1,269.9 332.2,269.6 332.3,269.3 332.3,269.3 332.3,285.6 332.3,285.6 332.3,284.8 332.4,282.3 332.4,280.3 332.5,278.8 332.5,277.8 332.6,277.2 332.7,276.8 332.8,276.5 332.9,276.2 332.9,276.2 332.9,285.6 332.9,285.6 332.9,285.6 333.0,285.6 333.0,285.6 333.0,284.9 333.1,284.0 333.2,283.4 333.2,282.9 333.3,282.6 333.4,282.3 333.4,282.3 333.4,285.6 333.4,285.6 333.4,285.6 333.4,285.6 333.5,285.6 333.5,285.6 333.5,285.6 333.6,285.6 333.6,285.6 333.7,285.6 333.8,285.6 333.8,285.5"/>
<polyline stroke="#3fd6d2" points="142.0,285.5 142.3,246.0 142.8,280.0 143.6,285.5 143.6,259.9 143.6,260.9 143.7,263.1 143.9,265.5 144.1,267.5 144.3,269.0 144.6,270.0 144.9,270.6 145.3,271.0 145.7,271.3 146.1,271.5 146.1,271.5 146.1,250.9 146.1,252.0 146.2,254.3 146.4,256.7 146.6,258.8 146.8,260.3 147.1,261.3 147.4,261.9 147.8,262.4 148.2,262.7 148.6,262.9 148.6,262.9 148.6,242.6 148.6,243.7 148.7,246.0 148.9,248.5 149.1,250.6 149.3,252.2 149.6,253.2 149.9,253.9 150.3,254.3 150.7,254.6 151.1,254.9 151.1,254.9 151.1,234.3 151.1,235.5 151.2,237.8 151.4,240.4 151.6,242.5 151.8,244.1 152.1,245.2 152.4,245.8 152.8,246.3 153.2,246.6 153.6,246.9 153.6,246.9 153.6,227.1 153.6,228.2 153.7,230.6 153.9,233.3 154.1,235.5 154.3,237.1 154.6,238.2 154.9,238.9 155.3,239.3 155.6,239.7 156.1,239.9 156.1,239.9 156.1,219.9 156.1,221.1 156.2,223.6 156.4,226.2 156.6,228.5 156.8,230.1 157.1,231.2 157.4,232.0 157.8,232.4 158.1,232.8 158.6,233.0 158.6,233.0 158.6,212.7 158.6,214.0 158.7,216.5 158.9,219.2 159.1,221.5 159.3,223.2 159.6,224.3 159.9,225.1 160.2,225.6 160.6,225.9 161.1,226.2 161.1,226.2 161.1,207.3 161.1,208.5 161.2,211.1 161.4,213.9 161.6,216.3 161.8,218.0 162.1,219.2 162.4,219.9 162.8,220.4 163.2,220.7 163.6,221.0 163.6,221.0 163.6,202.3 163.7,203.7 163.8,206.4 163.9,209.4 164.1,211.8 164.4,213.5 164.7,214.6 165.0,215.3 165.4,215.8 165.8,216.1 166.3,216.4 166.3,216.4 166.3,197.2 166.3,198.6 166.4,201.5 166.6,204.6 166.8,207.0 167.1,208.7 167.4,209.8 167.7,210.6 168.1,211.0 168.6,211.4 169.0,211.6 169.0,211.6 169.0,191.8 169.1,193.3 169.2,196.4 169.4,199.5 169.6,202.1 169.9,203.8 170.2,204.9 170.6,205.6 171.0,206.0 171.4,206.4 171.9,206.6 171.9,206.6 171.9,187.3 172.0,189.0 172.1,192.2 172.3,195.5 172.5,198.1 172.8,199.8 173.2,200.9 173.5,201.5 174.0,202.0 174.5,202.3 175.0,202.5 175.0,202.5 175.0,182.8 175.0,184.5 175.2,187.9 175.3,191.4 175.6,194.0 175.9,195.7 176.2,196.7 176.6,197.4 177.1,197.8 177.6,198.1 178.1,198.4 178.1,198.4 178.1,178.2 178.2,180.0 178.3,183.6 178.5,187.2 178.8,189.8 179.1,191.5 179.5,192.6 179.9,193.2 180.4,193.7 180.9,194.0 181.4,194.2 181.4,194.2 181.4,173.7 181.5,175.7 181.6,179.5 181.8,183.2 182.1,185.9 182.4,187.6 182.8,188.6 183.3,189.2 183.8,189.6 184.3,189.9 184.9,190.1 184.9,190.1 184.9,169.0 185.0,171.1 185.1,175.2 185.3,179.0 185.6,181.7 185.9,183.4 186.3,184.4 186.8,185.0 187.3,185.4 187.9,185.7 188.5,185.9 188.5,185.9 188.5,164.3 188.6,166.5 188.7,170.7 188.9,174.7 189.2,177.4 189.6,179.1 190.0,180.0 190.5,180.7 191.0,181.1 191.6,181.3 192.3,181.5 192.3,181.5 192.3,161.2 192.3,163.5 192.5,167.9 192.7,171.9 193.0,174.6 193.4,176.2 193.8,177.1 194.3,177.7 194.9,178.1 195.5,178.3 196.2,178.5 196.2,178.5 196.2,158.0 196.3,160.5 196.4,164.9 196.7,168.9 197.0,171.6 197.4,173.1 197.8,174.0 198.4,174.6 199.0,175.0 199.6,175.2 200.3,175.3 200.3,175.3 200.3,155.5 200.4,158.0 200.5,162.6 200.8,166.6 201.1,169.2 201.5,170.7 202.0,171.6 202.6,172.1 203.2,172.5 203.9,172.7 204.6,172.8 204.6,172.8 204.6,153.8 204.7,156.4 204.9,161.1 205.1,165.1 205.5,167.7 205.9,169.1 206.4,170.0 207.0,170.5 207.6,170.8 208.3,171.0 209.1,171.1 209.1,171.1 209.1,152.5 209.2,155.3 209.3,160.1 209.6,164.1 210.0,166.6 210.4,168.0 211.0,168.8 211.6,169.3 212.2,169.6 213.0,169.8 213.8,169.9 213.8,169.9 213.8,151.5 213.9,154.3 214.0,159.3 214.3,163.3 214.7,165.8 215.2,167.1 215.7,167.8 216.3,168.3 217.0,168.6 217.8,168.8 218.7,168.9 218.7,168.9 218.7,150.4 218.7,153.3 218.9,158.4 219.3,162.4 219.6,164.8 220.1,166.1 220.7,166.8 221.4,167.2 222.1,167.5 222.9,167.7 223.8,167.8 223.8,167.8 223.8,149.4 223.9,152.5 224.1,157.7 224.4,161.7 224.8,164.0 225.3,165.3 225.9,165.9 226.6,166.4 227.3,166.6 228.2,166.8 229.1,166.8 229.1,166.8 229.1,148.7 229.2,151.9 229.4,157.2 229.8,161.2 230.2,163.4 230.7,164.6 231.3,165.3 232.0,165.7 232.8,165.9 233.7,166.0 234.7,166.1 234.7,166.1 234.7,147.9 234.8,151.1 235.0,156.4 235.3,160.4 235.8,162.7 236.3,163.8 236.9,164.5 237.6,164.9 238.4,165.1 239.3,165.3 240.3,165.3 240.3,165.3 240.3,147.1 240.4,150.3 240.6,155.6 241.0,159.7 241.4,161.9 241.9,163.1 242.5,163.7 243.3,164.1 244.1,164.3 245.0,164.5 245.9,164.5 245.9,164.5 245.9,146.3 246.0,149.5 246.2,154.8 246.6,158.9 247.0,161.1 247.5,162.3 248.2,162.9 248.9,163.3 249.7,163.6 250.6,163.7 251.5,163.8 251.5,163.8 251.5,146.0 251.6,149.2 251.8,154.5 252.2,158.6 252.6,160.8 253.2,162.0 253.8,162.6 254.5,163.0 255.3,163.2 256.2,163.4 257.2,163.4 257.2,163.4 257.2,145.7 257.2,148.9 257.5,154.2 257.8,158.2 258.2,160.5 258.8,161.6 259.4,162.3 260.1,162.7 260.9,162.9 261.8,163.1 262.8,163.1 262.8,163.1 262.8,145.4 262.9,148.6 263.1,153.9 263.4,157.9 263.9,160.2 264.4,161.3 265.0,162.0 265.7,162.4 266.5,162.6 267.4,162.8 268.4,162.8 268.4,162.8 268.4,145.1 268.5,148.3 268.7,153.6 269.0,157.6 269.5,159.9 270.0,161.0 270.6,161.7 271.3,162.1 272.1,162.3 273.0,162.5 274.0,162.5 274.0,162.5 274.0,144.8 274.1,148.0 274.3,153.3 274.6,157.3 275.1,159.6 275.6,160.7 276.2,161.4 277.0,161.8 277.8,162.0 278.6,162.1 279.6,162.2 279.6,162.2 279.6,144.5 279.7,147.7 279.9,153.0 280.3,157.1 280.7,159.3 281.2,160.5 281.9,161.1 282.6,161.5 283.4,161.7 284.3,161.9 285.2,161.9 285.2,161.9 285.2,144.5 285.3,147.7 285.5,153.0 285.9,157.0 286.3,159.3 286.8,160.4 287.5,161.1 288.2,161.5 289.0,161.7 289.9,161.8 290.9,161.9 290.9,161.9 290.9,144.4 290.9,147.6 291.2,153.0 291.5,157.0 291.9,159.2 292.5,160.4 293.1,161.0 293.8,161.4 294.6,161.7 295.5,161.8 296.5,161.9 296.5,161.9 296.5,144.4 296.6,148.8 296.9,155.0 297.4,158.6 298.0,160.3 298.8,161.1 299.7,161.5 300.7,161.7 301.9,161.8 303.2,161.8 304.6,161.9 304.6,161.9 304.6,144.3 304.7,147.9 305.0,153.6 305.3,157.5 305.8,159.5 306.4,160.6 307.2,161.1 308.0,161.5 308.9,161.6 309.9,161.7 311.0,161.8 311.0,161.8 311.0,144.3 311.1,148.3 311.4,154.3 311.8,158.1 312.4,159.9 313.1,160.8 313.9,161.3 314.8,161.5 315.9,161.7 317.0,161.7 318.3,161.8 318.3,161.8 318.3,144.2 318.4,148.2 318.7,154.1 319.1,158.0 319.7,159.8 320.4,160.7 321.2,161.2 322.1,161.5 323.1,161.6 324.3,161.7 325.5,161.7 325.5,161.7 325.5,144.2 325.6,148.7 326.0,155.0 326.5,158.6 327.1,160.2 327.9,160.9 328.9,161.3 330.0,161.5 331.2,161.6 332.5,161.6 334.0,161.7 334.0,161.7 334.0,144.1 334.1,148.5 334.4,154.6 334.9,158.3 335.5,159.9 336.3,160.8 337.2,161.2 338.2,161.4 339.4,161.5 340.6,161.6 342.0,161.6 342.0,161.6 342.0,144.1 342.1,147.9 342.4,153.8 342.8,157.7 343.3,159.5 344.0,160.5 344.8,161.0 345.7,161.3 346.7,161.4 347.8,161.5 349.0,161.5 349.0,161.5 349.0,144.0 349.1,148.4 349.4,154.5 349.9,158.2 350.5,159.8 351.3,160.7 352.2,161.1 353.2,161.3 354.4,161.4 355.6,161.5 357.0,161.5 357.0,161.5 357.0,143.9 357.1,147.9 357.4,153.9 357.8,157.7 358.4,159.5 359.1,160.4 359.9,160.9 360.8,161.2 361.8,161.3 363.0,161.4 364.2,161.4 364.2,161.4 364.2,143.9 364.3,147.2 364.5,152.6 364.9,156.6 365.3,158.8 365.9,159.9 366.5,160.6 367.3,160.9 368.1,161.2 369.0,161.3 370.0,161.3 370.0,154.5 370.6,154.5"/>
<polyline stroke="#f0a31a" points="373.0,160.5 373.0,160.5 373.0,193.3 373.1,187.3 373.2,177.9 373.4,171.4 373.7,168.1 374.1,166.3 374.5,165.2 374.9,164.3 375.5,163.7 376.1,163.2 376.7,162.8 376.7,162.8 376.7,200.8 376.8,191.3 377.0,178.4 377.3,171.3 377.7,168.1 378.1,166.4 378.7,165.1 379.3,164.2 380.0,163.5 380.8,163.1 381.7,162.9 381.7,162.9 381.7,202.5 381.8,194.2 381.9,181.6 382.2,173.6 382.5,169.7 382.9,167.7 383.3,166.3 383.9,165.2 384.4,164.4 385.1,163.9 385.8,163.5 385.8,163.5 385.8,202.6 385.9,193.3 386.1,180.2 386.3,172.7 386.7,169.3 387.1,167.4 387.7,166.1 388.3,165.1 388.9,164.4 389.7,163.9 390.5,163.6 390.5,163.6 390.5,202.7 390.6,194.3 390.7,181.8 391.0,173.9 391.3,170.2 391.7,168.2 392.2,166.8 392.7,165.7 393.3,165.0 394.0,164.5 394.7,164.1 394.7,164.1 394.7,202.8 394.8,193.1 395.0,180.0 395.3,172.8 395.7,169.6 396.1,167.8 396.7,166.5 397.3,165.5 398.0,164.9 398.8,164.5 399.7,164.3 399.7,164.3 399.7,202.9 399.8,192.9 400.0,179.6 400.3,172.7 400.7,169.6 401.2,167.9 401.8,166.6 402.5,165.8 403.2,165.2 404.1,164.8 405.0,164.6 405.0,164.6 405.0,203.1 405.1,194.0 405.3,181.3 405.5,173.9 405.9,170.6 406.3,168.7 406.9,167.4 407.5,166.5 408.1,165.8 408.9,165.3 409.7,165.1 409.7,165.1 409.7,203.2 409.8,194.5 409.9,182.0 410.2,174.5 410.6,171.1 411.0,169.2 411.5,167.9 412.1,166.9 412.7,166.2 413.4,165.8 414.2,165.5 414.2,165.5 414.2,203.3 414.3,194.6 414.4,182.2 414.7,174.8 415.1,171.4 415.5,169.5 416.0,168.2 416.6,167.2 417.2,166.6 417.9,166.1 418.7,165.8 418.7,165.8 418.7,203.4 418.8,194.6 419.0,182.2 419.2,174.9 419.6,171.6 420.0,169.8 420.5,168.5 421.1,167.5 421.8,166.8 422.5,166.4 423.3,166.1 423.3,166.1 423.3,203.6 423.4,188.8 423.8,175.8 424.4,171.4 425.1,169.3 425.9,167.9 427.0,167.1 428.1,166.7 429.5,166.5 430.9,166.5 432.5,166.5 432.5,166.5 432.5,205.8 432.6,191.0 433.0,177.4 433.5,172.6 434.2,170.4 435.0,169.0 436.0,168.1 437.1,167.7 438.4,167.5 439.8,167.4 441.3,167.3 441.3,167.3 441.3,206.0 441.5,191.0 441.8,178.4 442.4,174.3 443.2,172.3 444.1,171.0 445.2,170.3 446.4,170.0 447.8,169.8 449.3,169.8 451.0,169.8 451.0,169.8 451.0,208.0 451.1,194.3 451.5,182.0 452.0,177.8 452.7,175.8 453.6,174.5 454.6,173.8 455.7,173.4 457.0,173.2 458.4,173.1 460.0,173.1 460.0,173.1 460.0,210.0 460.1,197.1 460.5,185.4 461.0,181.5 461.7,179.6 462.6,178.4 463.6,177.6 464.7,177.3 466.0,177.1 467.4,177.0 469.0,177.0 469.0,177.0 469.0,212.0 469.1,202.6 469.4,192.3 469.8,188.0 470.3,186.2 471.0,185.0 471.8,184.2 472.7,183.7 473.7,183.5 474.8,183.3 476.0,183.2 476.0,183.2 476.0,216.0 476.1,210.9 476.2,203.2 476.5,198.1 476.8,195.6 477.1,194.3 477.6,193.5 478.1,192.8 478.7,192.3 479.3,191.9 480.0,191.7 480.0,191.7 480.0,222.0 480.0,218.6 480.1,212.5 480.3,207.2 480.5,203.8 480.7,201.9 481.0,200.7 481.3,199.9 481.7,199.3 482.1,198.8 482.5,198.4 482.5,198.4 482.5,230.0 482.5,227.6 482.6,222.7 482.7,217.7 482.8,213.8 483.0,211.1 483.2,209.5 483.4,208.4 483.6,207.6 483.9,207.0 484.2,206.5 484.2,206.5 484.2,240.0 484.2,237.9 484.3,233.6 484.4,229.2 484.5,225.5 484.7,223.1 484.8,221.5 485.0,220.4 485.3,219.7 485.5,219.1 485.8,218.7 485.8,218.7 485.8,251.0 485.8,248.7 485.9,243.9 486.0,238.9 486.1,234.9 486.3,232.1 486.4,230.3 486.6,229.2 486.9,228.4 487.1,227.8 487.4,227.2 487.4,227.2 487.4,261.0 487.4,258.9 487.5,254.5 487.6,249.8 487.7,245.9 487.8,243.1 488.0,241.3 488.1,240.1 488.3,239.3 488.6,238.7 488.8,238.2 488.8,238.2 488.8,271.0 488.8,268.8 488.9,264.4 488.9,259.5 489.0,255.6 489.1,252.7 489.3,250.9 489.4,249.7 489.6,248.8 489.8,248.2 490.0,247.7 490.0,247.7 490.0,281.0 490.0,278.8 490.1,274.3 490.1,269.4 490.2,265.4 490.3,262.5 490.4,260.6 490.5,259.4 490.7,258.6 490.8,257.9 491.0,257.4 491.0,257.4 491.0,285.6 491.0,285.6 491.0,284.4 491.1,280.3 491.2,276.9 491.2,274.5 491.3,272.9 491.4,271.9 491.5,271.2 491.7,270.6 491.8,270.2 491.8,270.2 491.8,285.6 491.8,285.6 491.8,285.6 491.9,285.6 491.9,285.6 492.0,285.6 492.0,285.6 492.1,285.6 492.2,285.6 492.3,285.6 492.4,285.6 492.4,285.5"/>
</g>
<g font-size="6.6" fill="#333" text-anchor="end">
<text x="139.5" y="123.15">131.4</text>
<text x="139.5" y="139.65">118.2</text>
<text x="139.5" y="156.15">105.1</text>
<text x="139.5" y="172.65">92.0</text>
<text x="139.5" y="189.15">78.8</text>
<text x="139.5" y="205.65">65.7</text>
<text x="139.5" y="222.15">52.6</text>
<text x="139.5" y="238.65">39.4</text>
<text x="139.5" y="255.15">26.3</text>
<text x="139.5" y="271.65">13.1</text>
<text x="139.5" y="288.15">0.0</text>
</g>
<g font-size="6.6" fill="#333" text-anchor="middle">
<text x="142.00" y="295.2">0</text>
<text x="182.90" y="295.2">4509</text>
<text x="223.80" y="295.2">9019</text>
<text x="264.70" y="295.2">13529</text>
<text x="305.60" y="295.2">18038</text>
<text x="346.50" y="295.2">22548</text>
<text x="387.40" y="295.2">27058</text>
<text x="428.30" y="295.2">31567</text>
<text x="469.20" y="295.2">36077</text>
<text x="510.10" y="295.2">40587</text>
<text x="551.00" y="295.2">45097</text>
</g>
<text x="346.6" y="306.3" font-size="8" fill="#555" text-anchor="middle">time(s)</text>
<text transform="translate(119.6,203.3) rotate(-90)" font-size="8" fill="#555" text-anchor="middle">pressure(kPa)</text>
<text x="335.8" y="113.3" font-size="7.5" fill="#444" text-anchor="middle">Equilibration</text>
<rect x="220.30" y="318.6" width="4.2" height="4.4" fill="#f5a623" stroke="#a86a10" stroke-width="0.7"/>
<text x="226.70" y="323.9" font-size="8.2" fill="#555" textLength="17.0" lengthAdjust="spacingAndGlyphs">Ads1</text>
<rect x="249.75" y="318.6" width="4.2" height="4.4" fill="#6ec4ee" stroke="#3a86b0" stroke-width="0.7"/>
<text x="256.15" y="323.9" font-size="8.2" fill="#555" textLength="17.6" lengthAdjust="spacingAndGlyphs">Des1</text>
<rect x="279.20" y="318.6" width="4.2" height="4.4" fill="#a01040" stroke="#5a0820" stroke-width="0.7"/>
<text x="285.60" y="323.9" font-size="8.2" fill="#555" textLength="17.0" lengthAdjust="spacingAndGlyphs">Ads2</text>
<rect x="308.65" y="318.6" width="4.2" height="4.4" fill="#ab22cf" stroke="#6a1088" stroke-width="0.7"/>
<text x="315.05" y="323.9" font-size="8.2" fill="#555" textLength="17.6" lengthAdjust="spacingAndGlyphs">Des2</text>
<rect x="338.10" y="318.6" width="4.2" height="4.4" fill="#9cc81c" stroke="#5e7c10" stroke-width="0.7"/>
<text x="344.50" y="323.9" font-size="8.2" fill="#555" textLength="17.0" lengthAdjust="spacingAndGlyphs">Ads3</text>
<rect x="367.55" y="318.6" width="4.2" height="4.4" fill="#22c32e" stroke="#147a1c" stroke-width="0.7"/>
<text x="373.95" y="323.9" font-size="8.2" fill="#555" textLength="17.6" lengthAdjust="spacingAndGlyphs">Des3</text>
<rect x="397.00" y="318.6" width="4.2" height="4.4" fill="#3fd6d2" stroke="#208a88" stroke-width="0.7"/>
<text x="403.40" y="323.9" font-size="8.2" fill="#555" textLength="17.0" lengthAdjust="spacingAndGlyphs">Ads4</text>
<rect x="426.45" y="318.6" width="4.2" height="4.4" fill="#f0a31a" stroke="#a06a10" stroke-width="0.7"/>
<text x="432.85" y="323.9" font-size="8.2" fill="#555" textLength="17.6" lengthAdjust="spacingAndGlyphs">Des4</text>
</svg>
<div class="abs" style="left:106.3px;top:339px;width:459.7px;height:18px;background:#fff;"></div>
<div class="abs" style="left:112.3px;top:343.6px;width:12.4px;height:8.4px;border:0.8px solid #d4d4d4;border-radius:1px;box-sizing:border-box;background:#f6f6f6;"></div>
<div class="abs" style="left:116.4px;top:345.6px;width:6.4px;height:4.6px;background:#e9e9e9;"></div>
<div class="abs abox" style="left:376.6px"><i></i></div>
<div class="abs abox" style="left:423.1px"><i></i></div>
<div class="abs abox" style="left:469.6px"><i></i></div>
<div class="abs abox" style="left:516.1px"><i></i></div>

<div class="abs t" style="left:109.5px;top:25.13px;font-size:9.30px;color:#1a1a1a;transform:scaleX(0.981);transform-origin:0 0;">File</div>
<div class="abs t" style="left:143.0px;top:25.13px;font-size:9.30px;color:#1a1a1a;transform:scaleX(1.012);transform-origin:0 0;">Settings</div>
<div class="abs t" style="left:185.8px;top:25.13px;font-size:9.30px;color:#1a1a1a;transform:scaleX(1.020);transform-origin:0 0;">Operate</div>
<div class="abs t" style="left:236.8px;top:25.13px;font-size:9.30px;color:#1a1a1a;transform:scaleX(0.955);transform-origin:0 0;">Data</div>
<div class="abs t" style="left:278.8px;top:25.13px;font-size:9.30px;color:#1a1a1a;transform:scaleX(1.072);transform-origin:0 0;">Help</div>
<div class="abs t" style="left:110.3px;top:54.91px;font-size:6.60px;color:#111;transform:scaleX(0.985);transform-origin:0 0;">sync440</div>
<div class="abs t" style="left:110.8px;top:73.03px;font-size:6.70px;color:#fff;transform:scaleX(0.975);transform-origin:0 0;">Analysis4</div>
<div class="abs t" style="left:147.5px;top:73.03px;font-size:6.70px;color:#333;transform:scaleX(1.049);transform-origin:0 0;">Mesopore</div>
<div class="abs t" style="left:201.8px;top:72.90px;font-size:6.50px;color:#222;transform:scaleX(0.977);transform-origin:0 0;">Pressure:</div>
<div class="abs t" style="left:231.3px;top:72.90px;font-size:6.50px;color:#222;transform:scaleX(0.938);transform-origin:0 0;">0</div>
<div class="abs t" style="left:281.0px;top:72.90px;font-size:6.50px;color:#222;transform:scaleX(1.026);transform-origin:0 0;">kPaTemperature:</div>
<div class="abs t" style="left:334.3px;top:72.90px;font-size:6.50px;color:#222;transform:scaleX(0.996);transform-origin:0 0;">23.6764</div>
<div class="abs t" style="left:373.2px;top:72.90px;font-size:6.50px;color:#222;transform:scaleX(0.892);transform-origin:0 0;">℃</div>
<div class="abs t" style="left:387.7px;top:72.90px;font-size:6.50px;color:#222;transform:scaleX(1.006);transform-origin:0 0;">p0:</div>
<div class="abs t" style="left:398.8px;top:72.90px;font-size:6.50px;color:#222;transform:scaleX(0.938);transform-origin:0 0;">0</div>
<div class="abs t" style="left:437.7px;top:72.90px;font-size:6.50px;color:#222;transform:scaleX(0.893);transform-origin:0 0;">kPa</div>
<div class="abs t" style="left:505.5px;top:72.81px;font-size:6.60px;color:#0d1f05;transform:scaleX(1.020);transform-origin:0 0;">Start Analysis</div>
<div class="abs t" style="left:135.5px;top:89.10px;font-size:9.10px;color:#9a9a9a;transform:scaleX(1.012);transform-origin:0 0;">Isotherm</div>
<div class="abs t" style="left:224.9px;top:88.90px;font-size:9.10px;color:#1a1a1a;transform:scaleX(0.991);transform-origin:0 0;">Equilibration</div>
<div class="abs t" style="left:325.2px;top:89.10px;font-size:9.10px;color:#9a9a9a;transform:scaleX(0.961);transform-origin:0 0;">Schematic</div>
<div class="abs t" style="left:129.3px;top:346.28px;font-size:6.40px;color:#222;transform:scaleX(1.035);transform-origin:0 0;">Analysis1:ManualCtrl::vacuumizeProc:Start vac</div>
<div class="abs t" style="left:378.6px;top:343.10px;font-size:6.50px;color:#222;">Analysis1</div>
<div class="abs t" style="left:425.1px;top:343.10px;font-size:6.50px;color:#222;">Analysis2</div>
<div class="abs t" style="left:471.6px;top:343.10px;font-size:6.50px;color:#222;">Analysis3</div>
<div class="abs t" style="left:518.1px;top:343.10px;font-size:6.50px;color:#222;">Analysis4</div>
<div class="abs t" style="left:100.3px;top:370.88px;font-size:9.00px;color:#111;transform:scaleX(0.974);transform-origin:0 0;">Synchronized Pore Analysis System</div>
<div class="abs t" style="left:399.2px;top:372.80px;font-size:6.50px;color:#222;transform:scaleX(1.032);transform-origin:0 0;">Beijing JWGB Sci &amp; Tech Inc.</div>
<div class="abs t" style="left:497.9px;top:372.80px;font-size:6.50px;color:#222;transform:scaleX(1.045);transform-origin:0 0;">2020/03/28 18:17</div>
</body></html>
